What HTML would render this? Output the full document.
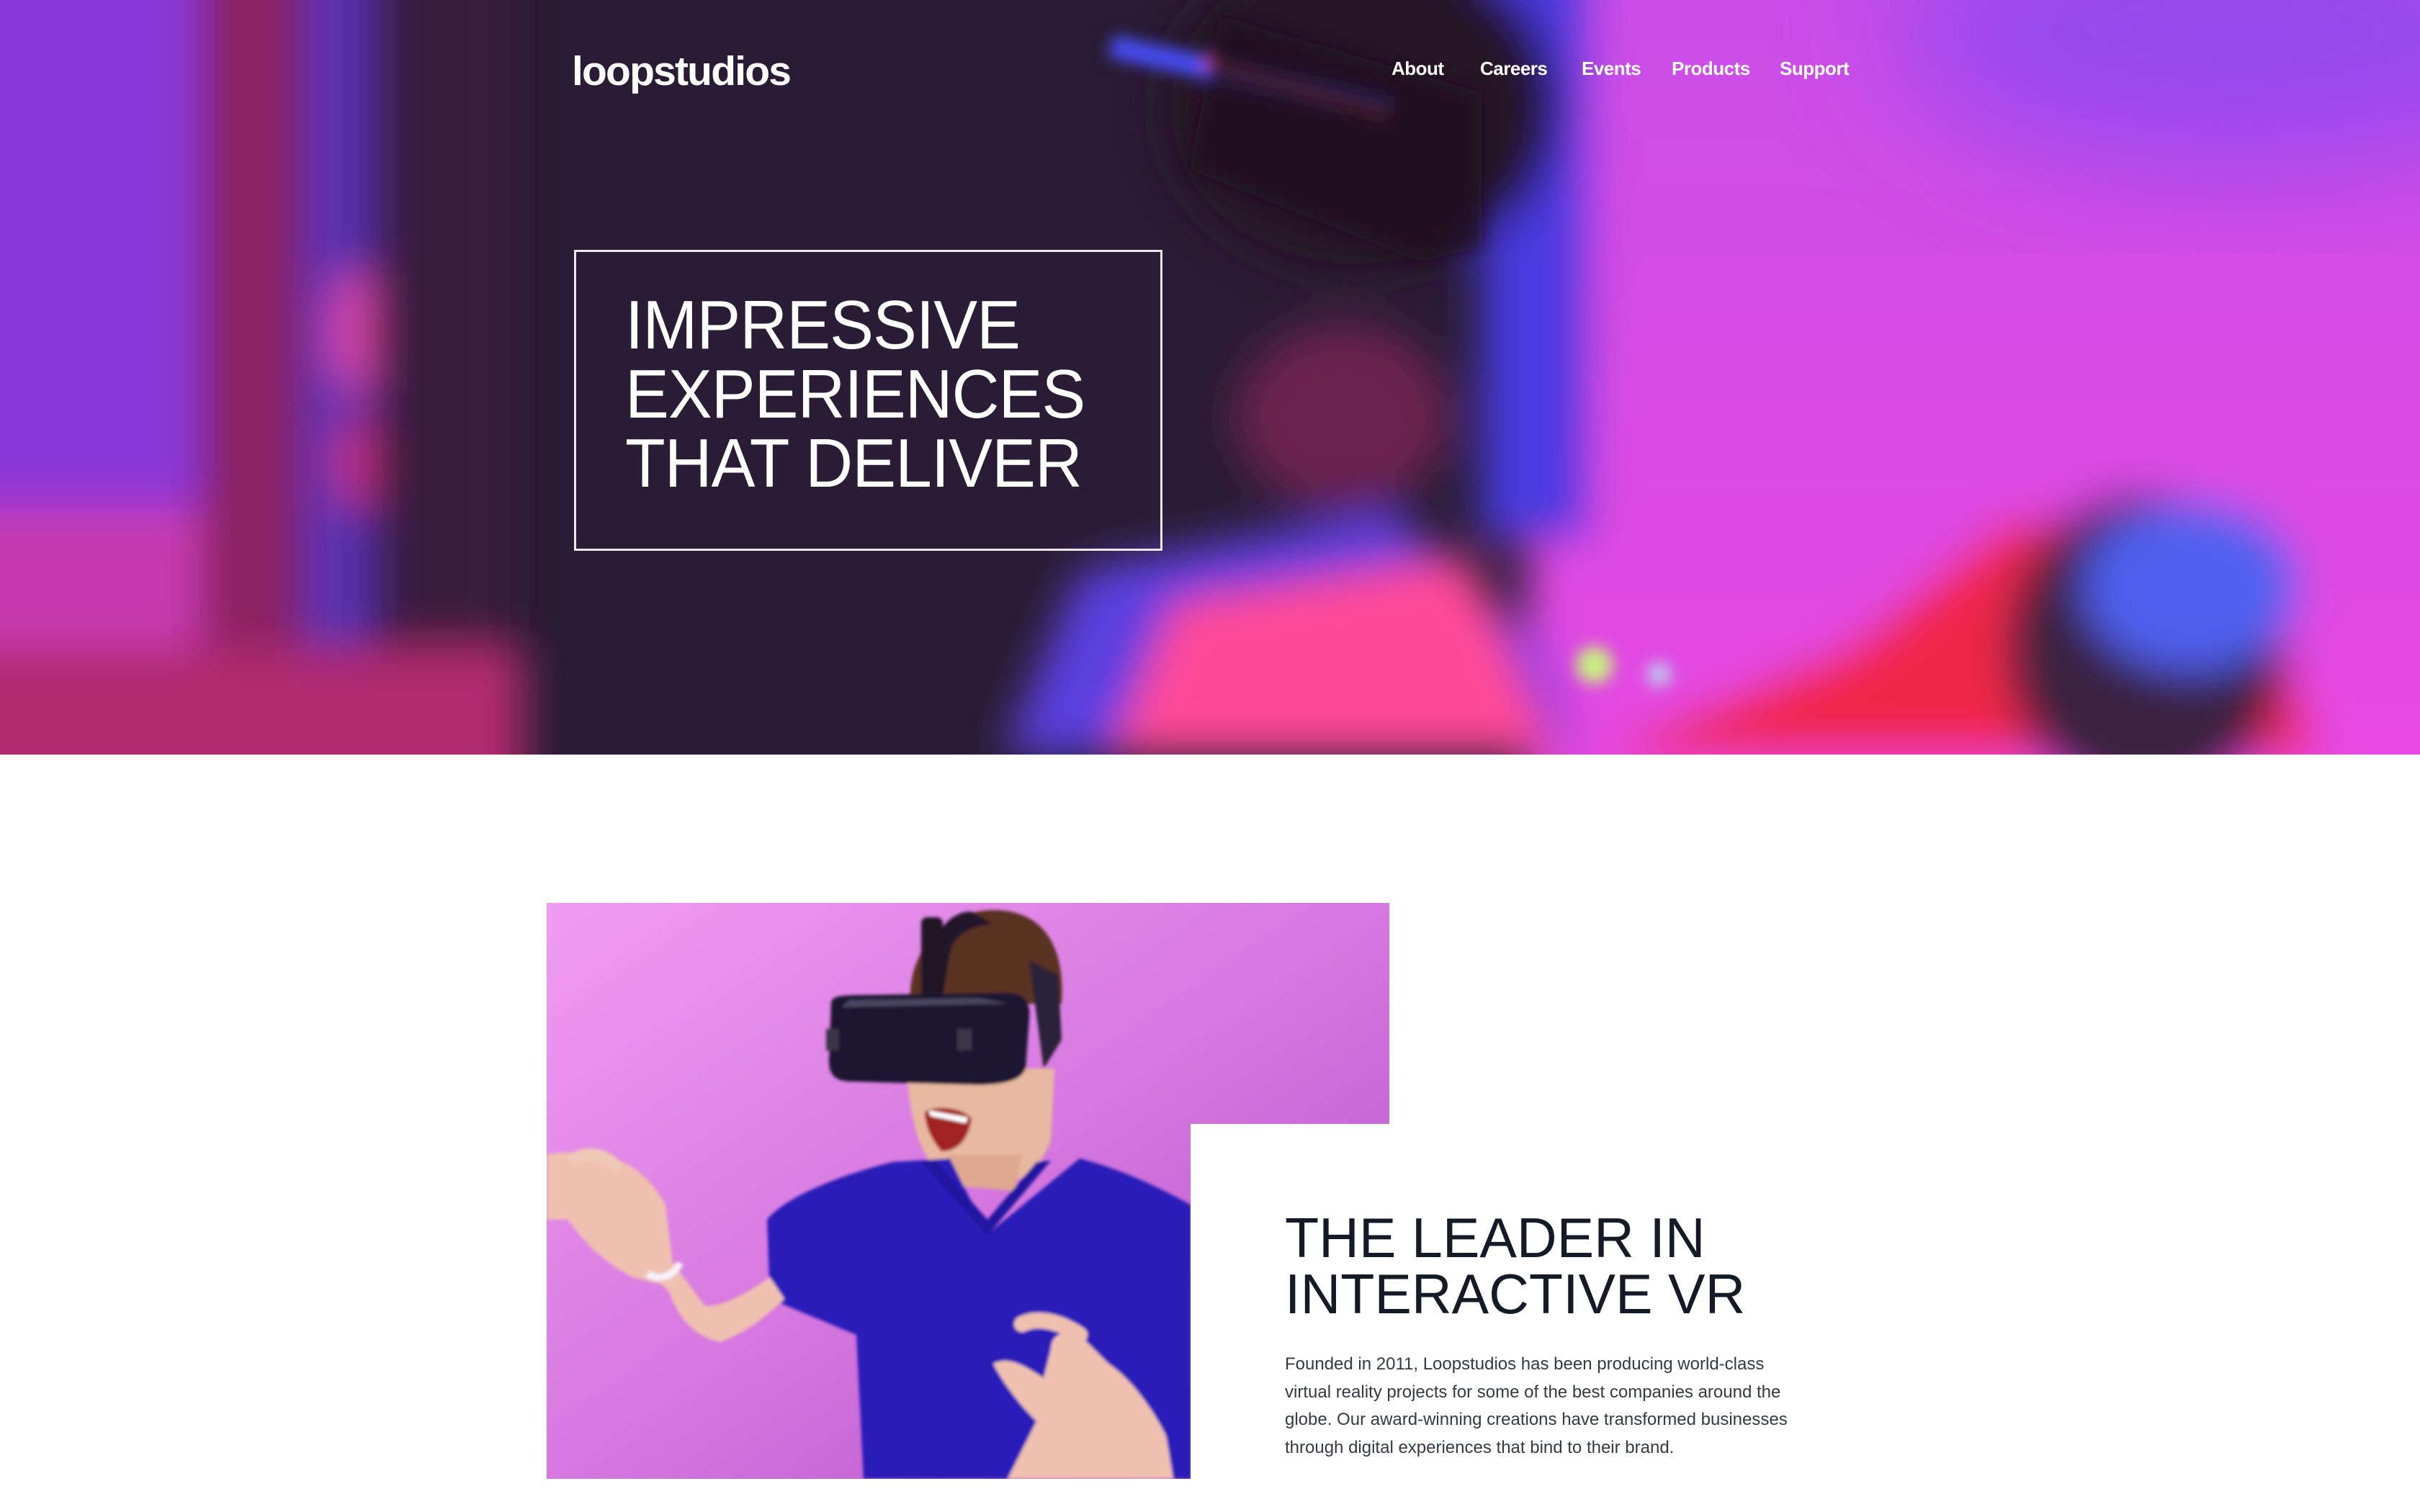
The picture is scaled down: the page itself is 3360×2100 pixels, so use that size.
<!DOCTYPE html>
<html><head><meta charset="utf-8">
<style>
*{margin:0;padding:0;box-sizing:border-box}
html,body{width:3360px;height:2100px;overflow:hidden;background:#fff;font-family:"Liberation Sans",sans-serif}
.hero{position:absolute;left:0;top:0;width:3360px;height:1048px;overflow:hidden;background:#2a1c35}
.hero svg{position:absolute;left:0;top:0}
.logo{position:absolute;left:794px;top:66px;font-size:57px;font-weight:bold;color:#fff;letter-spacing:-1.8px}
.nav{position:absolute;top:80px;font-size:26px;font-weight:bold;color:#fff;letter-spacing:-0.5px}
.box{position:absolute;left:797px;top:347px;width:817px;height:418px;border:3px solid #e8e8ee}
.h1{position:absolute;left:868px;top:404px;font-size:96px;line-height:96px;color:#fff;white-space:nowrap;font-weight:normal;transform:scaleX(0.95);transform-origin:0 0;letter-spacing:-1px}
.pic{position:absolute;left:759px;top:1254px;width:1170px;height:800px;overflow:hidden}
.card{position:absolute;left:1653px;top:1561px;width:1200px;height:539px;background:#fff}
.h2{position:absolute;left:1784px;top:1680px;font-size:78px;line-height:78px;color:#141a26;white-space:nowrap;transform:scaleX(0.99);transform-origin:0 0}
.p{position:absolute;left:1784px;top:1876px;font-size:24px;line-height:38.6px;color:#363944;white-space:nowrap}
</style></head><body>
<div class="hero">
<svg width="3360" height="1048" viewBox="0 0 1568 489" preserveAspectRatio="none">
<defs>
<filter id="b" x="-20%" y="-20%" width="140%" height="140%"><feGaussianBlur stdDeviation="14"/></filter>
<filter id="b3" x="-30%" y="-30%" width="160%" height="160%"><feGaussianBlur stdDeviation="40"/></filter>
<filter id="b2" x="-20%" y="-20%" width="140%" height="140%"><feGaussianBlur stdDeviation="5"/></filter>
<linearGradient id="rg" x1="0" y1="0" x2="0" y2="1"><stop offset="0" stop-color="#c84ee8"/><stop offset="1" stop-color="#e848e0"/></linearGradient>
</defs>
<rect width="1568" height="489" fill="#2a1c35"/>
<g filter="url(#b)">
<rect x="-40" y="-40" width="200" height="580" fill="#8a38d8"/>
<rect x="-40" y="330" width="200" height="200" fill="#c83ab0"/>
<rect x="130" y="-40" width="70" height="580" fill="#8a2060"/>
<rect x="195" y="-40" width="50" height="580" fill="#5a30b0"/>
<ellipse cx="232" cy="215" rx="18" ry="40" fill="#e04ab0"/>
<ellipse cx="232" cy="300" rx="14" ry="30" fill="#d0308a"/>
<ellipse cx="262" cy="175" rx="22" ry="18" fill="#e03060"/>
<rect x="240" y="-40" width="90" height="580" fill="#3a1c40"/>
<rect x="-40" y="420" width="380" height="120" fill="#b02a70"/>
<rect x="990" y="-40" width="620" height="580" fill="url(#rg)"/>
<rect x="960" y="-40" width="70" height="390" fill="#4a3ae0"/>
<ellipse cx="880" cy="70" rx="130" ry="110" fill="#261628"/>
<ellipse cx="870" cy="270" rx="70" ry="60" fill="#6a2450"/>
<path d="M650 489 L700 370 L900 330 L1000 420 L1020 489Z" fill="#5a40e0"/>
<path d="M720 489 L760 390 L950 360 L1010 489Z" fill="#ff4898"/>
<path d="M1040 489 L1200 420 L1300 340 L1450 330 L1500 489Z" fill="#f02848"/>
<ellipse cx="1390" cy="420" rx="90" ry="100" fill="#3a2040"/>
<ellipse cx="1420" cy="380" rx="70" ry="55" fill="#5060f0"/>
</g>
<g filter="url(#b3)">
<ellipse cx="1450" cy="20" rx="220" ry="90" fill="#8a48f0" opacity="0.8"/>
</g>
<g filter="url(#b2)">
<path d="M720 30 L900 70" stroke="#4a50ff" stroke-width="14"/>
<path d="M780 40 L900 75" stroke="#ff5040" stroke-width="6"/>
<path d="M790 10 L960 60 L960 160 L920 170 L770 110Z" fill="#1e1020" opacity="0.8"/>
<circle cx="1033" cy="431" r="12" fill="#c8f080"/>
<circle cx="1075" cy="437" r="8" fill="#c0c8f0"/>
</g>
</svg>
<div class="logo">loopstudios</div>
<div class="nav" style="left:1932px">About</div>
<div class="nav" style="left:2055px">Careers</div>
<div class="nav" style="left:2196px">Events</div>
<div class="nav" style="left:2321px">Products</div>
<div class="nav" style="left:2471px">Support</div>
<div class="box"></div>
<div class="h1">IMPRESSIVE<br>EXPERIENCES<br>THAT DELIVER</div>
</div>

<div class="pic">
<svg width="1170" height="800" viewBox="0 0 1170 800">
<defs>
<linearGradient id="bg" x1="0" y1="0" x2="1" y2="1"><stop offset="0" stop-color="#f09cf2"/><stop offset="0.5" stop-color="#d578e0"/><stop offset="1" stop-color="#b050c4"/></linearGradient>
<filter id="s"><feGaussianBlur stdDeviation="2"/></filter>
</defs>
<rect width="1170" height="800" fill="url(#bg)"/>
<g filter="url(#s)">
<path d="M505 140 C500 60 560 10 620 10 C690 10 720 60 715 140Z" fill="#5a3020"/>
<path d="M500 230 L705 230 L700 330 C680 385 630 400 590 395 C530 385 505 330 500 230Z" fill="#e8b8a0"/>
<path d="M525 290 C540 280 580 285 590 300 C585 330 570 345 548 345 C535 330 525 310 525 290Z" fill="#a02020"/>
<path d="M530 288 L585 298 L582 306 L533 296Z" fill="#fff"/>
<path d="M540 390 L650 400 L660 350 L560 350Z" fill="#e0a890"/>
<path d="M590 12 C560 12 540 40 535 70 L520 125 L550 130 L560 70 C565 45 590 30 620 30 Z" fill="#20182a"/>
<rect x="520" y="20" width="30" height="110" rx="8" fill="#201828"/>
<path d="M670 80 L710 100 L715 190 L690 230 Z" fill="#2a2038"/>
<path d="M395 140 C395 130 405 128 440 128 L640 125 C665 125 672 140 670 160 L665 230 C660 245 640 252 600 253 L420 248 C400 247 392 238 392 220 Z" fill="#1c1830"/>
<path d="M420 135 L600 132 L640 140 L410 145Z" fill="#4a4460"/>
<rect x="388" y="175" width="18" height="30" fill="#3a3448"/>
<rect x="570" y="175" width="20" height="30" fill="#3a3448"/>
<path d="M306 440 C330 410 400 380 480 360 L560 355 L612 460 L740 355 C800 370 860 400 895 420 L895 800 L440 800 L430 600 L310 550Z" fill="#2a1ab8"/>
<path d="M520 360 L612 462 L700 358 L680 360 L612 440 L540 358Z" fill="#2414a0"/>
<path d="M330 550 C300 580 270 600 240 610 C200 600 180 570 170 540 L150 520 L175 500 L220 560 C250 560 280 540 310 520Z" fill="#f0c0b0"/>
<path d="M0 350 C20 345 60 345 90 355 C120 360 150 390 165 420 L175 500 L160 530 L120 520 C80 500 50 470 30 440 L0 440Z" fill="#f0c0b0"/>
<path d="M40 355 C60 345 80 350 95 365" stroke="#f0c8b8" stroke-width="18" fill="none" stroke-linecap="round"/>
<path d="M140 515 C155 525 175 520 185 500" stroke="#f6f2f8" stroke-width="10" fill="none"/>
<path d="M640 800 L680 720 C650 690 630 660 620 640 C640 630 660 640 690 660 L700 620 C700 600 720 590 740 600 L780 640 C810 660 840 700 860 740 L870 800Z" fill="#f0c0b0"/>
<path d="M660 585 C680 575 710 580 740 600" stroke="#f0c0b0" stroke-width="22" fill="none" stroke-linecap="round"/>
</g>
</svg>
</div>
<div class="card"></div>
<div class="h2">THE LEADER IN<br>INTERACTIVE VR</div>
<div class="p">Founded in 2011, Loopstudios has been producing world-class<br>virtual reality projects for some of the best companies around the<br>globe. Our award-winning creations have transformed businesses<br>through digital experiences that bind to their brand.</div>
</body></html>
